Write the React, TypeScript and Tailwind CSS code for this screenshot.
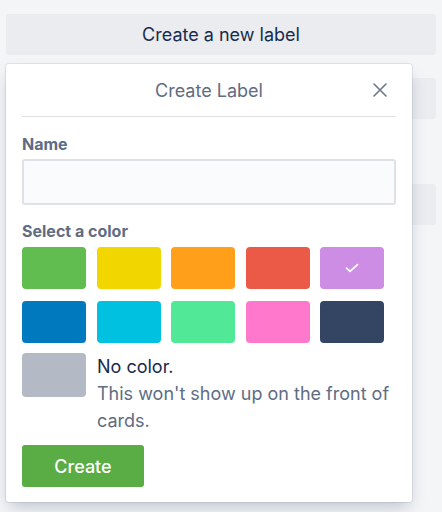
import React from "react";

const colors = [
  "#61bd4f",
  "#f2d600",
  "#ff9f1a",
  "#eb5a46",
  "#cd8de5",
  "#0079bf",
  "#00c2e0",
  "#51e898",
  "#ff78cb",
  "#344563",
];

export default function App() {
  return (
    <div
      className="relative w-[442px] h-[512px] bg-[#f4f5f7] overflow-hidden"
      style={{ fontFamily: "Inter, 'Noto Sans', sans-serif" }}
    >
      <div className="flex flex-col px-[6px] pt-[14px]">
        <button className="h-[41px] w-full rounded-[3px] bg-[#ebecf0] text-[18px] text-[#172b4d]">
          Create a new label
        </button>
        <div className="mt-[23px] h-[41px] w-full rounded-[3px] bg-[#ebecf0]" />
        <div className="mt-[65px] h-[41px] w-full rounded-[3px] bg-[#ebecf0]" />
      </div>

      <div className="absolute left-[6px] top-[64px] w-[406px] h-[438px] rounded-[3px] bg-white px-4 shadow-[0_8px_16px_-4px_rgba(9,30,66,0.25),0_0_0_1px_rgba(9,30,66,0.08)]">
        <div className="relative flex h-[53px] items-center justify-center border-b border-[#dfe1e6]">
          <span className="text-[18px] text-[#5e6c84]">Create Label</span>
          <button className="absolute right-0 top-[10px] flex h-[32px] w-[32px] items-center justify-center text-[#6b778c]">
            <svg width="14" height="14" viewBox="0 0 14 14" fill="none">
              <path d="M1 1L13 13M13 1L1 13" stroke="currentColor" strokeWidth="1.6" strokeLinecap="round" />
            </svg>
          </button>
        </div>

        <div className="mt-[17px] text-[16px] font-bold leading-[20px] text-[#5e6c84]">Name</div>
        <input
          className="mt-[5px] block h-[46px] w-full rounded-[3px] border-2 border-[#dfe1e6] bg-[#fafbfc] outline-none"
          type="text"
        />

        <div className="mt-[16px] text-[16px] font-bold leading-[20px] text-[#5e6c84]">Select a color</div>
        <div className="mt-[6px] grid w-[362px] grid-cols-[repeat(5,64px)] justify-between gap-y-[12px]">
          {colors.map((c, i) => (
            <div
              key={i}
              className="flex h-[42px] w-[64px] items-center justify-center rounded-[4px]"
              style={{ backgroundColor: c }}
            >
              {i === 4 && (
                <svg width="14" height="10" viewBox="0 0 14 10" fill="none">
                  <path d="M1.5 5.2L5 8.4L12.5 1.6" stroke="white" strokeWidth="1.8" strokeLinecap="round" strokeLinejoin="round" />
                </svg>
              )}
            </div>
          ))}
        </div>

        <div className="mt-[10px] flex gap-[11px]">
          <div className="h-[44px] w-[64px] shrink-0 rounded-[4px] bg-[#b3bac5]" />
          <div className="text-[18px] leading-[27px]">
            <div className="text-[#172b4d]">No color.</div>
            <div className="text-[#5e6c84]">This won't show up on the front of cards.</div>
          </div>
        </div>

        <button className="mt-[11px] h-[42px] w-[122px] rounded-[3px] bg-[#5aac44] text-[18px] font-medium text-white">
          Create
        </button>
      </div>
    </div>
  );
}
